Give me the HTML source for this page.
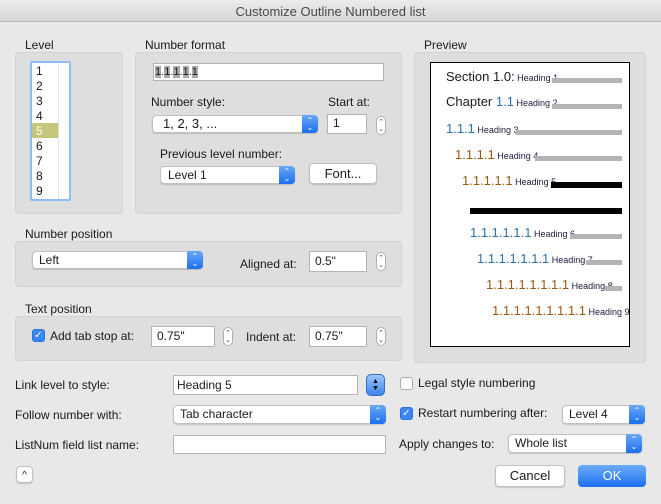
<!DOCTYPE html>
<html><head><meta charset="utf-8"><style>
*{box-sizing:border-box;margin:0;padding:0}
body{width:661px;height:504px;background:#e8e8e8;font-family:"Liberation Sans",sans-serif;font-size:12px;color:#1a1a1a;position:relative;overflow:hidden}
.a{position:absolute}
.t{position:absolute;white-space:nowrap;line-height:14px}
.grp{position:absolute;background:#dedede;border:1px solid #d3d3d3;border-radius:4px}
.in{position:absolute;background:#fff;border:1px solid #b4b4b4;padding-left:5px;line-height:17px;font-size:12px}
.pop{position:absolute;background:#fff;border:1px solid #c0c0c0;border-radius:4px;box-shadow:0 1px 1px rgba(0,0,0,.15);padding-left:8px;font-size:12px}
.pop .ar{position:absolute;right:-1px;top:-1px;bottom:-1px;width:16px;background:linear-gradient(#6aa8f7,#1c6ff0);border-radius:0 4px 4px 0;color:#fff;font-size:8px;line-height:7px;text-align:center;padding-top:2px}
.st{position:absolute;width:10px;height:19px;background:#fff;border:1px solid #b0b0b0;border-radius:5px;font-size:7px;line-height:7px;text-align:center;color:#444;padding-top:2px}
.btn{position:absolute;background:#fff;border:1px solid #c0c0c0;border-radius:4px;box-shadow:0 1px 1px rgba(0,0,0,.15);text-align:center;font-size:13px}
.cb{position:absolute;width:13px;height:13px;border-radius:3px;background:#fff;border:1px solid #aaa}
.cb.on{background:#3a86f2;border-color:#2a72dc;color:#fff;font-size:10px;line-height:11px;text-align:center}
.pv{position:absolute;white-space:nowrap;font-size:13px;line-height:14px}
.pv small{font-size:9px;color:#1a1a3a}
.bar{position:absolute;background:#b4b4b4;height:5px}
.b{color:#2e6fb0}.o{color:#9a5a10}
</style></head><body>
<div class="a" style="left:0;top:0;width:661px;height:22px;background:linear-gradient(#ececec,#d6d6d6);border-bottom:1px solid #b8b8b8"></div>
<div class="t" style="left:0;width:661px;top:5px;text-align:center;font-size:13px;color:#4a4a4a">Customize Outline Numbered list</div>

<div class="t" style="left:25px;top:38px">Level</div>
<div class="grp" style="left:15px;top:52px;width:108px;height:162px"></div>
<div class="a" style="left:30px;top:61px;width:41px;height:140px;background:#fff;border:2px solid #8fbcf2;border-radius:2px"></div>
<div class="a" style="left:58px;top:63px;width:1px;height:136px;background:#e0e0e0"></div>
<div class="a" style="left:32px;top:123px;width:26px;height:15px;background:#c6c57c"></div>
<div class="t" style="left:36px;top:64px;line-height:15px">1<br>2<br>3<br>4<br><span style="color:#fff">5</span><br>6<br>7<br>8<br>9</div>

<div class="t" style="left:145px;top:38px">Number format</div>
<div class="grp" style="left:135px;top:52px;width:267px;height:162px"></div>
<div class="in" style="left:153px;top:63px;width:231px;height:18px;line-height:16px;font-size:11px;padding-left:1px"><span style="background:#aaa">1</span>.<span style="background:#aaa">1</span>.<span style="background:#aaa">1</span>.<span style="background:#aaa">1</span>.<span style="background:#aaa">1</span></div>
<div class="t" style="left:151px;top:95px">Number style:</div>
<div class="pop" style="left:152px;top:115px;width:166px;height:18px;line-height:16px;font-size:13px;padding-left:10px">1, 2, 3, ...<div class="ar">⌃<br>⌄</div></div>
<div class="t" style="left:328px;top:95px">Start at:</div>
<div class="in" style="left:327px;top:114px;width:40px;height:20px">1</div>
<div class="st" style="left:376px;top:116px">⌃<br>⌄</div>
<div class="t" style="left:160px;top:147px">Previous level number:</div>
<div class="pop" style="left:160px;top:166px;width:135px;height:18px;line-height:16px;padding-left:7px">Level 1<div class="ar">⌃<br>⌄</div></div>
<div class="btn" style="left:309px;top:163px;width:68px;height:21px;line-height:19px">Font...</div>

<div class="t" style="left:424px;top:38px">Preview</div>
<div class="grp" style="left:414px;top:52px;width:232px;height:311px"></div>
<div class="a" style="left:430px;top:62px;width:200px;height:285px;background:#fff;border:1px solid #000"></div>
<div class="pv" style="left:446px;top:70px">Section 1.0:<small> Heading 1</small></div><div class="bar" style="left:552px;top:78px;width:70px"></div>
<div class="pv" style="left:446px;top:95px">Chapter <span class="b">1.1</span><small> Heading 2</small></div><div class="bar" style="left:552px;top:104px;width:70px"></div>
<div class="pv b" style="left:446px;top:122px">1.1.1<small> Heading 3</small></div><div class="bar" style="left:516px;top:130px;width:106px"></div>
<div class="pv o" style="left:455px;top:148px">1.1.1.1<small> Heading 4</small></div><div class="bar" style="left:535px;top:156px;width:87px"></div>
<div class="pv o" style="left:462px;top:174px">1.1.1.1.1<small> Heading 5</small></div><div class="bar" style="left:551px;top:182px;width:71px;background:#000;height:6px"></div>
<div class="bar" style="left:470px;top:208px;width:152px;background:#000;height:6px"></div>
<div class="pv b" style="left:470px;top:226px">1.1.1.1.1.1<small> Heading 6</small></div><div class="bar" style="left:570px;top:234px;width:52px"></div>
<div class="pv b" style="left:477px;top:252px">1.1.1.1.1.1.1<small> Heading 7</small></div><div class="bar" style="left:586px;top:260px;width:36px"></div>
<div class="pv o" style="left:486px;top:278px">1.1.1.1.1.1.1.1<small> Heading 8</small></div><div class="bar" style="left:605px;top:286px;width:17px"></div>
<div class="pv o" style="left:492px;top:304px">1.1.1.1.1.1.1.1.1<small> Heading 9</small></div><div class="bar" style="left:621px;top:312px;width:1px"></div>

<div class="t" style="left:25px;top:227px">Number position</div>
<div class="grp" style="left:15px;top:241px;width:387px;height:46px"></div>
<div class="pop" style="left:32px;top:251px;width:171px;height:18px;line-height:16px;padding-left:6px">Left<div class="ar">⌃<br>⌄</div></div>
<div class="t" style="left:240px;top:257px">Aligned at:</div>
<div class="in" style="left:309px;top:251px;width:58px;height:21px;line-height:19px">0.5"</div>
<div class="st" style="left:376px;top:252px">⌃<br>⌄</div>

<div class="t" style="left:25px;top:302px">Text position</div>
<div class="grp" style="left:15px;top:316px;width:387px;height:45px"></div>
<div class="cb on" style="left:32px;top:329px">✓</div>
<div class="t" style="left:50px;top:329px">Add tab stop at:</div>
<div class="in" style="left:151px;top:326px;width:64px;height:21px;line-height:19px">0.75"</div>
<div class="st" style="left:223px;top:327px">⌃<br>⌄</div>
<div class="t" style="left:246px;top:330px">Indent at:</div>
<div class="in" style="left:309px;top:326px;width:58px;height:21px;line-height:19px">0.75"</div>
<div class="st" style="left:376px;top:327px">⌃<br>⌄</div>

<div class="t" style="left:15px;top:378px">Link level to style:</div>
<div class="in" style="left:173px;top:375px;width:185px;height:20px;line-height:18px;padding-left:3px">Heading 5</div>
<div class="a" style="left:366px;top:374px;width:19px;height:22px;border-radius:5px;background:linear-gradient(#9cc6fa,#3c84ee);border:1px solid #3a6fb8;color:#000;font-size:7px;line-height:7px;text-align:center;padding-top:3px">▲<br>▼</div>
<div class="cb" style="left:400px;top:377px"></div>
<div class="t" style="left:418px;top:376px">Legal style numbering</div>

<div class="t" style="left:15px;top:408px">Follow number with:</div>
<div class="pop" style="left:173px;top:405px;width:213px;height:19px;line-height:17px;padding-left:6px">Tab character<div class="ar">⌃<br>⌄</div></div>
<div class="cb on" style="left:400px;top:407px">✓</div>
<div class="t" style="left:418px;top:406px">Restart numbering after:</div>
<div class="pop" style="left:562px;top:405px;width:83px;height:19px;line-height:17px;padding-left:6px">Level 4<div class="ar">⌃<br>⌄</div></div>

<div class="t" style="left:15px;top:438px">ListNum field list name:</div>
<div class="in" style="left:173px;top:435px;width:213px;height:19px"></div>
<div class="t" style="left:399px;top:437px">Apply changes to:</div>
<div class="pop" style="left:508px;top:434px;width:134px;height:19px;line-height:17px;padding-left:6px">Whole list<div class="ar">⌃<br>⌄</div></div>

<div class="btn" style="left:16px;top:466px;width:17px;height:17px;line-height:17px;font-size:10px">^</div>
<div class="btn" style="left:495px;top:465px;width:70px;height:22px;line-height:20px">Cancel</div>
<div class="a" style="left:578px;top:465px;width:68px;height:22px;border-radius:4px;background:linear-gradient(#6eacf8,#1a6ff1);color:#fff;text-align:center;line-height:22px;font-size:13px">OK</div>
</body></html>
